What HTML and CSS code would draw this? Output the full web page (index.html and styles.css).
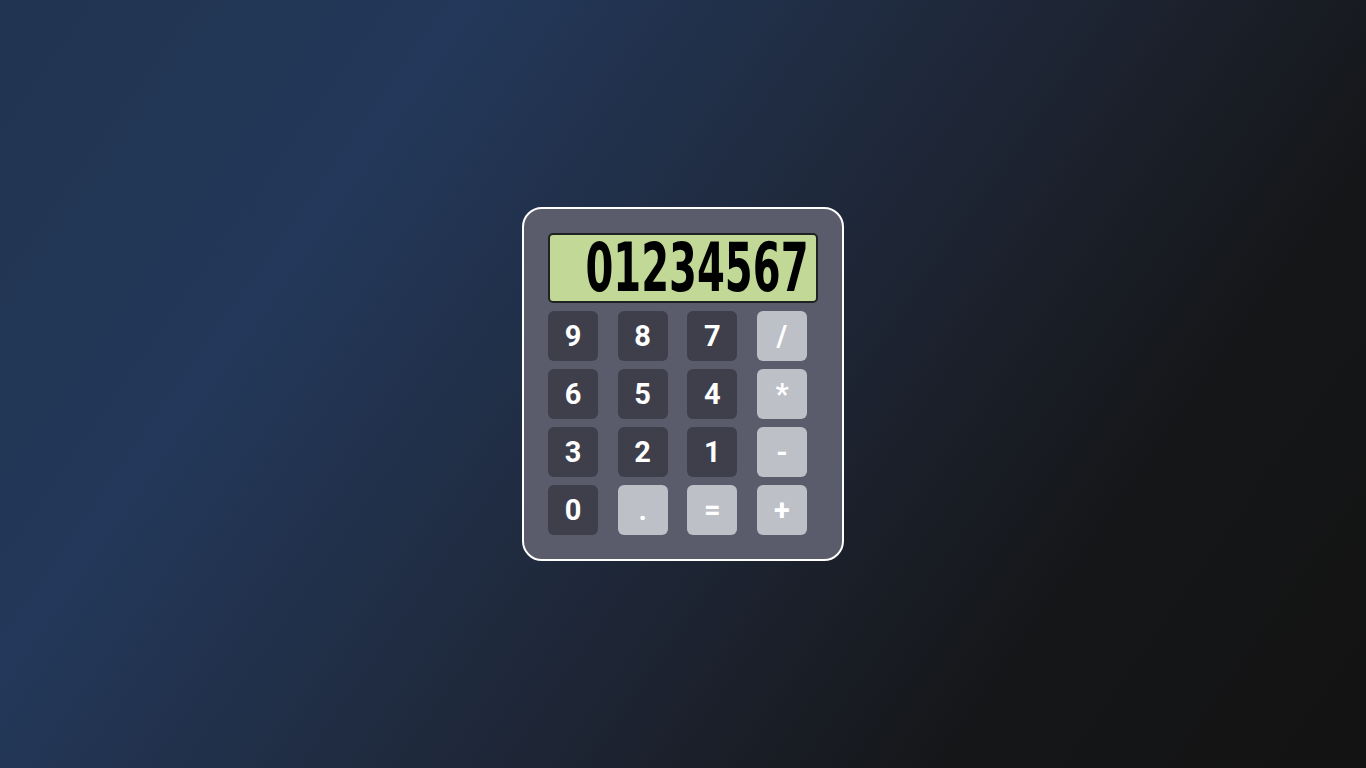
FILE: index.html
```html
<!DOCTYPE html>
<html lang="en">
<head>
<meta charset="utf-8">
<title>Calculator</title>
<link rel="stylesheet" href="styles.css">
</head>
<body>
<main class="page">
  <div class="calc">
    <div class="display"><span class="readout">01234567</span></div>
    <div class="keys">
      <button class="key num">9</button>
      <button class="key num">8</button>
      <button class="key num">7</button>
      <button class="key op">/</button>
      <button class="key num">6</button>
      <button class="key num">5</button>
      <button class="key num">4</button>
      <button class="key op">*</button>
      <button class="key num">3</button>
      <button class="key num">2</button>
      <button class="key num">1</button>
      <button class="key op">-</button>
      <button class="key num">0</button>
      <button class="key op">.</button>
      <button class="key op">=</button>
      <button class="key op">+</button>
    </div>
  </div>
</main>
</body>
</html>
```

FILE: styles.css
```css
* { box-sizing: border-box; }
html, body { margin: 0; height: 100%; }
body {
  font-family: Roboto, "Liberation Sans", sans-serif;
  background: linear-gradient(125deg, #213450 0%, #23385a 25%, #1e2636 55%, #151618 78%, #131313 100%);
}
.page {
  width: 1366px;
  height: 768px;
  display: flex;
  align-items: center;
  justify-content: center;
}
.calc {
  width: 322px;
  height: 354px;
  border: 2px solid #ffffff;
  border-radius: 20px;
  background: #5b5c6b;
  padding: 24px;
  display: flex;
  flex-direction: column;
  gap: 8px;
}
.display {
  height: 70px;
  border: 2px solid #1f2122;
  border-radius: 5px;
  background: #c1d897;
  display: flex;
  align-items: center;
  justify-content: flex-end;
  padding-right: 7px;
}
.readout {
  display: inline-block;
  flex-shrink: 0;
  white-space: nowrap;
  font-family: "DejaVu Sans Condensed", "DejaVu Sans", sans-serif;
  font-weight: bold;
  font-size: 67px;
  line-height: 1;
  color: #000;
  transform: scaleX(0.665);
  transform-origin: right center;
}
.keys {
  display: grid;
  grid-template-columns: repeat(4, 50px);
  grid-auto-rows: 50px;
  column-gap: 19.67px;
  row-gap: 8px;
}
.key {
  border: none;
  border-radius: 6px;
  color: #ffffff;
  font-family: Roboto, "Liberation Sans", sans-serif;
  font-weight: bold;
  font-size: 29px;
  padding: 0;
  display: flex;
  align-items: center;
  justify-content: center;
}
.num { background: #3e3f4b; }
.op { background: #bdc0c7; }
```
